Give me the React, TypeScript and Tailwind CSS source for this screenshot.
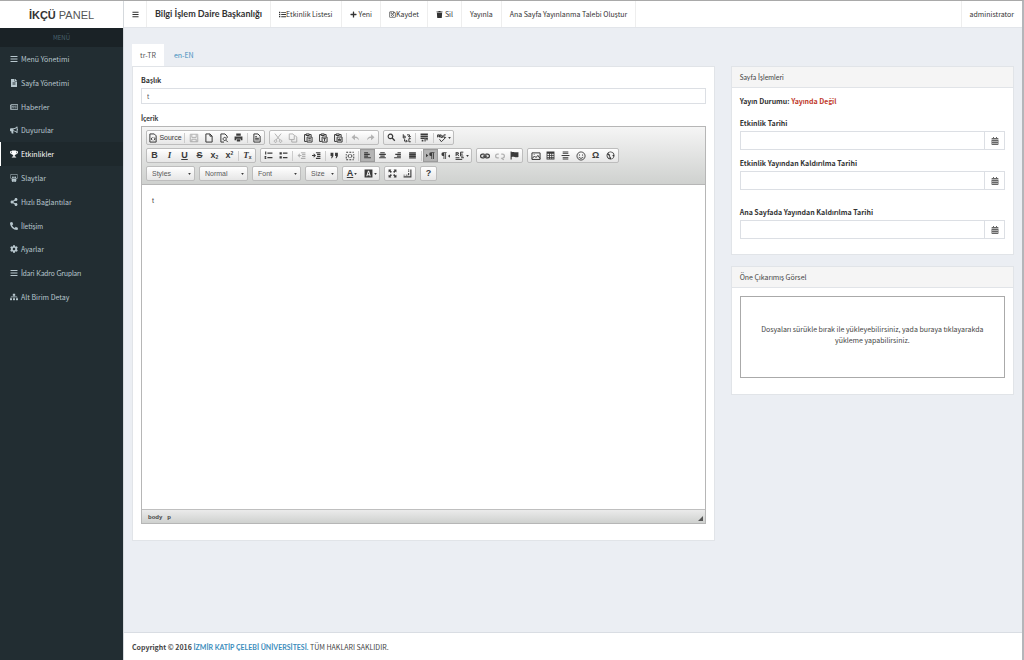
import { useState } from "react";
import type { ReactNode } from "react";
import {
  FaBars,
  FaBullhorn,
  FaCalendarAlt,
  FaCog,
  FaFileAlt,
  FaList,
  FaPhoneAlt,
  FaPlus,
  FaRegNewspaper,
  FaRegSave,
  FaShareAlt,
  FaSitemap,
  FaSlideshare,
  FaTrash,
  FaTrophy,
} from "react-icons/fa";

const menu = [
  { label: "Menü Yönetimi", icon: FaBars },
  { label: "Sayfa Yönetimi", icon: FaFileAlt },
  { label: "Haberler", icon: FaRegNewspaper },
  { label: "Duyurular", icon: FaBullhorn },
  { label: "Etkinlikler", icon: FaTrophy },
  { label: "Slaytlar", icon: FaSlideshare },
  { label: "Hızlı Bağlantılar", icon: FaShareAlt },
  { label: "İletişim", icon: FaPhoneAlt },
  { label: "Ayarlar", icon: FaCog },
  { label: "İdari Kadro Grupları", icon: FaBars },
  { label: "Alt Birim Detay", icon: FaSitemap },
];

const actions = [
  { label: "Etkinlik Listesi", icon: FaList },
  { label: "Yeni", icon: FaPlus, space: true },
  { label: "Kaydet", icon: FaRegSave },
  { label: "Sil", icon: FaTrash, space: true },
  { label: "Yayınla" },
  { label: "Ana Sayfa Yayınlanma Talebi Oluştur" },
];

// the base font has no dotted capital I, so those labels are set in Lato
const fontFor = (text: string) => (text.includes("İ") ? "font-['Lato',sans-serif]" : "");

// stroke icons for the editor toolbar, 16x16 grid
const paths: Record<string, string> = {
  source: "M3 1.5h7l3 3v10H3zM7 7L5 9.500l2 2M9.500 7l2 2.500-2 2",
  save: "M2 2h12v12H2zM4.500 2v5h7V2M4.500 14v-4h7v4",
  page: "M3 1.500h6.500l3.500 3.500v9.500H3zM9.500 1.500V5H13",
  preview: "M13 8V5L9.500 1.500H3v13h5M9 7a2.500 2.500 0 1 0 .1 0M11 11.500l3 3",
  templates: "M3 1.500h6.500l3.500 3.500v9.500H3zM5 6h3M5 8.500h6M5 11h6",
  cut: "M3 1l8 10M13 1L5 11M4 11a2 2 0 1 0 .1 0M12 11a2 2 0 1 0 .1 0",
  copy: "M2 1.500h6l2 2v7H2zM6 10.500v4h8v-8l-2-2h-2",
  paste: "M5 2.500H2.500v11H6M10 2.500h3V6M5 1.500h5v2.500H5zM6.500 6.500h8v8h-8zM8.500 9h4M8.500 11.500h4",
  pasteText: "M5 2.500H2.500v11H6M10 2.500h3V6M5 1.500h5v2.500H5zM6.500 6.500h8v8h-8zM8.500 9h4M10.500 9v4",
  pasteWord: "M5 2.500H2.500v11H6M10 2.500h3V6M5 1.500h5v2.500H5zM6.500 6.500h8v8h-8zM8 9l1.500 3.500L10.500 9l1 3.500L13 9",
  replace: "M2 2v6M2 5h3v3H2M4 10v3h4M6.500 11l2 2-2 2M14 9h-3v5h3M8 3h4v3M10 5l2 2 2-2",
  image: "M1.500 3h13v10.500h-13zM2 12l3.500-4L8 10.500l3-3.500 3.500 5M4.500 5.500h1",
  smiley: "M8 1.500a6.500 6.500 0 1 0 .1 0M5.500 5.500v2M10.500 5.500v2M4.500 9.500c1.500 3 5.500 3 7 0",
  link: "M7 5H4a3 3 0 0 0 0 6h3M9 5h3a3 3 0 0 1 0 6H9M4.500 8h7M7 6h2M7 10h2",
  unlink: "M6 5H4a3 3 0 0 0 0 6h2M10 5h2a3 3 0 0 1 0 6M10 11l4 3",
  div: "M2 2h3M7 2h3M12 2h2M2 14h3M7 14h3M12 14h2M2 5v2M14 5v2M2 9v3M14 9v3M7 5L4.500 8 7 11M9 5l2.500 3L9 11",
};

function Draw({ name, thick = "1.6" }: { name: string; thick?: string }) {
  return (
    <svg viewBox="0 0 16 16" className="size-[10px]" fill="none" stroke="currentColor" strokeWidth={thick}>
      <path d={paths[name]} />
    </svg>
  );
}

// solid icons are plain filled shapes on the same grid
function Solid({ d }: { d: string }) {
  return (
    <svg viewBox="0 0 16 16" className="size-[9px]" fill="currentColor" fillRule="evenodd">
      <path d={d} />
    </svg>
  );
}

const solid = {
  print: "M4 1h8v4H4zM1 6h14v7h-3v-3H4v3H1zM5 11h6v4H5z",
  find: "M6 1a5 5 0 1 0 2.800 9.200L13 14.500l1.700-1.700-4.200-4.200A5 5 0 0 0 6 1zm0 2a3 3 0 1 1 0 6 3 3 0 0 1 0-6z",
  undo: "M7 2v4c5 0 7 3 7 7-2-3-4-4-7-4v4L1 7.500z",
  redo: "M9 2v4c-5 0-7 3-7 7 2-3 4-4 7-4v4l6-5.500z",
  selectAll: "M1 1h13v3H1zM1 5h13v2.500H1zM1 8.500h13v2H1zM3 12h3v3H3zM8 10h2v5H8zM11 11h3v2h-3z",
  numbered: "M2 1h2v5H2zM1 9h3v2H3v1h1v2H1v-1h1v-1H1zM6 2.500h9v2.500H6zM6 10.500h9V13H6z",
  bullets: "M1 2h4v4H1zM1 9.500h4v4H1zM7 2.500h8V5H7zM7 10.500h8V13H7z",
  outdent: "M7 2h8v2H7zM9 5h6v2H9zM9 8.500h6v2H9zM7 12h8v2H7zM5 4v3h3v2H5v3L1 8z",
  indent: "M7 2h8v2H7zM9 5h6v2H9zM9 8.500h6v2H9zM7 12h8v2H7zM3 4l4 4-4 4V9H0V7h3z",
  quote: "M1 3h5v6l-2.500 4H2l1-4H1zM9 3h5v6l-2.500 4H10l1-4H9z",
  left: "M2 2h7v2H2zM2 5h10v2H2zM2 8h7v2H2zM2 11h12v2H2z",
  center: "M4 2h8v2H4zM2 5h12v2H2zM4 8h8v2H4zM2 11h12v2H2z",
  right: "M8 2h6v2H8zM4 5h10v2H4zM7 8h7v2H7zM2 11h12v2H2z",
  justify: "M2 2h12v2.500H2zM2 5h12v2.500H2zM2 8h12v2.500H2zM2 11h12v2.500H2z",
  ltr: "M0 5l4 3-4 3zM9 2h6v1.500h-1V14h-1.500V3.500H11V14H9.500V9a3.500 3.500 0 0 1-.5-7z",
  rtl: "M16 6l-4 3 4 3zM4 2h6v1.500H9V14H7.500V3.500H6V14H4.500V9A3.500 3.500 0 0 1 4 2z",
  flag: "M1 1h2v1c4-1.500 6 1.500 12 0v8.500c-6 1.500-8-1.500-12 0V15H1z",
  table: "M1 1h14v14H1zM2.500 5v2h3V5zM7 5v2h2.500V5zM11 5v2h2.500V5zM2.500 8.500v2h3v-2zM7 8.500v2h2.500v-2zM11 8.500v2h2.500v-2zM2.500 12v1.500h3V12zM7 12v1.500h2.500V12zM11 12v1.500h2.500V12z",
  rule: "M3 1h10v1.500H3zM3 4h10v1.500H3zM1 7h14v2H1zM3 10.500h10V12H3zM3 13.500h10V15H3z",
  globe: "M8 1a7 7 0 1 0 .1 0zM8 2.300a5.700 5.700 0 0 1 5.500 4.200L11 8l2.500 2A5.700 5.700 0 0 1 9 13.600L8.500 11l-2-2 1-2L4 4a5.700 5.700 0 0 1 4-1.700zM3 6l2.500 3 1 4.300A5.700 5.700 0 0 1 3 6z",
  maximize: "M1 1h5L4.500 2.500 7 5 5 7 2.500 4.500 1 6zM15 1h-5l1.500 1.500L9 5l2 2 2.500-2.500L15 6zM1 15h5l-1.500-1.500L7 11 5 9l-2.500 2.500L1 10zM15 15h-5l1.500-1.500L9 11l2-2 2.500 2.500L15 10z",
  blocks: "M13 1h2v14H1v-2h12zM9 1h2v1.500H9zM9 4h2v1.500H9zM9 7h2v4H9zM1 10h2v1.500H1zM5 10h3v1.500H5z",
  textBg: "M1 1h14v14H1zM7 3L4 13h1.800l.6-2h3.200l.6 2H12L9 3zM8 5.500L9.200 9.500H6.800z",
};

function Tool({
  label,
  children,
  on = false,
  off = false,
  arrow = false,
}: {
  label: string;
  children: ReactNode;
  on?: boolean;
  off?: boolean;
  arrow?: boolean;
}) {
  return (
    <button
      type="button"
      aria-label={label}
      aria-pressed={on || undefined}
      disabled={off}
      className={`flex h-[13px] items-center justify-center text-[9px] leading-none font-bold ${
        arrow ? "w-[18px] gap-px" : "w-[15px]"
      } ${on ? "bg-[#b5b5b5] shadow-[inset_0_0_1px_1px_#999]" : ""} ${off ? "opacity-35" : ""}`}
    >
      {children}
      {arrow && <Caret />}
    </button>
  );
}

function Caret() {
  return (
    <svg viewBox="0 0 4 3" className="h-[2px] w-[3px] shrink-0" fill="currentColor">
      <path d="M0 0h4L2 3z" />
    </svg>
  );
}

function Group({ children }: { children: ReactNode }) {
  return (
    <div className="flex items-center rounded-xs border border-[#bdbdbd] bg-gradient-to-b from-white to-[#e6e6e6]">
      {children}
    </div>
  );
}

function Sep() {
  return <span className="mx-px h-[10px] w-px bg-[#ccc]" />;
}

function Combo({ label, width = "w-[49px]" }: { label: string; width?: string }) {
  return (
    <div
      className={`relative rounded-xs border border-[#bdbdbd] bg-gradient-to-b from-white to-[#e6e6e6] ${width}`}
    >
      <select
        aria-label={label}
        className="block h-[13px] w-full appearance-none pl-[5px] text-[7px] leading-[13px] text-[#5a5a5a] outline-none"
      >
        <option>{label}</option>
      </select>
      <span className="pointer-events-none absolute top-[6px] right-[3px]">
        <Caret />
      </span>
    </div>
  );
}

function Toolbar() {
  return (
    <div className="flex flex-col gap-[3px] border-b border-[#b6b6b6] bg-gradient-to-b from-[#f5f5f5] to-[#cfd1cf] px-1 py-[3px] text-[#3a3a3a]">
      <div className="flex gap-1">
        <Group>
          <button type="button" className="flex h-[13px] w-[36px] items-center justify-center gap-px text-[7px]">
            <Draw name="source" />
            Source
          </button>
          <Sep />
          <Tool label="Save" off><Draw name="save" /></Tool>
          <Tool label="New Page"><Draw name="page" /></Tool>
          <Tool label="Preview"><Draw name="preview" /></Tool>
          <Tool label="Print"><Solid d={solid.print} /></Tool>
          <Sep />
          <Tool label="Templates"><Draw name="templates" /></Tool>
        </Group>
        <Group>
          <Tool label="Cut" off><Draw name="cut" /></Tool>
          <Tool label="Copy" off><Draw name="copy" /></Tool>
          <Tool label="Paste"><Draw name="paste" /></Tool>
          <Tool label="Paste as plain text"><Draw name="pasteText" /></Tool>
          <Tool label="Paste from Word"><Draw name="pasteWord" /></Tool>
          <Sep />
          <Tool label="Undo" off><Solid d={solid.undo} /></Tool>
          <Tool label="Redo" off><Solid d={solid.redo} /></Tool>
        </Group>
        <Group>
          <Tool label="Find"><Solid d={solid.find} /></Tool>
          <Tool label="Replace"><Draw name="replace" /></Tool>
          <Sep />
          <Tool label="Select All"><Solid d={solid.selectAll} /></Tool>
          <Sep />
          <Tool label="Spell Check" arrow>
            <svg viewBox="0 0 16 16" className="size-[10px]" fill="none" stroke="currentColor" strokeWidth="1.6">
              <path d="M1 7V3h3v4M1 5h3M6 2v5h3V4.500H6M14 3h-3v4h3M4 10l3 4 7-7" />
            </svg>
          </Tool>
        </Group>
      </div>

      <div className="flex gap-1">
        <Group>
          <Tool label="Bold">B</Tool>
          <Tool label="Italic"><i className="font-['Liberation_Serif',serif]">I</i></Tool>
          <Tool label="Underline"><span className="underline">U</span></Tool>
          <Tool label="Strikethrough"><span className="line-through">S</span></Tool>
          <Tool label="Subscript">x<sub className="text-[5px]">2</sub></Tool>
          <Tool label="Superscript">x<sup className="text-[5px]">2</sup></Tool>
          <Sep />
          <Tool label="Remove Format"><i className="font-['Liberation_Serif',serif]">T</i><sub className="text-[5px]">x</sub></Tool>
        </Group>
        <Group>
          <Tool label="Numbered List"><Solid d={solid.numbered} /></Tool>
          <Tool label="Bulleted List"><Solid d={solid.bullets} /></Tool>
          <Sep />
          <Tool label="Decrease Indent" off><Solid d={solid.outdent} /></Tool>
          <Tool label="Increase Indent"><Solid d={solid.indent} /></Tool>
          <Sep />
          <Tool label="Block Quote"><Solid d={solid.quote} /></Tool>
          <Tool label="Div Container"><Draw name="div" /></Tool>
          <Sep />
          <Tool label="Align Left" on><Solid d={solid.left} /></Tool>
          <Tool label="Center"><Solid d={solid.center} /></Tool>
          <Tool label="Align Right"><Solid d={solid.right} /></Tool>
          <Tool label="Justify"><Solid d={solid.justify} /></Tool>
          <Sep />
          <Tool label="Left to right" on><Solid d={solid.ltr} /></Tool>
          <Tool label="Right to left"><Solid d={solid.rtl} /></Tool>
          <Tool label="Language" arrow>
            <svg viewBox="0 0 18 16" className="h-[9px] w-[10px]" fill="none" stroke="currentColor" strokeWidth="1.8">
              <path d="M2 2v7M2 3h4v2.500H2M4 6l3 3M15 2h-5v7h5M10 5.500h4M1 12h7M11 12h5M1 15h12" />
            </svg>
          </Tool>
        </Group>
        <Group>
          <Tool label="Link"><Draw name="link" thick="2" /></Tool>
          <Tool label="Unlink" off><Draw name="unlink" thick="2" /></Tool>
          <Tool label="Anchor"><Solid d={solid.flag} /></Tool>
        </Group>
        <Group>
          <Tool label="Image"><Draw name="image" /></Tool>
          <Tool label="Table"><Solid d={solid.table} /></Tool>
          <Tool label="Horizontal Line"><Solid d={solid.rule} /></Tool>
          <Tool label="Smiley"><Draw name="smiley" thick="1.4" /></Tool>
          <Tool label="Special Character">Ω</Tool>
          <Tool label="IFrame"><Solid d={solid.globe} /></Tool>
        </Group>
      </div>

      <div className="flex gap-1">
        <Combo label="Styles" />
        <Combo label="Normal" />
        <Combo label="Font" />
        <Combo label="Size" width="w-[33px]" />
        <Group>
          <Tool label="Text Color" arrow><span className="underline">A</span></Tool>
          <Tool label="Background Color" arrow><Solid d={solid.textBg} /></Tool>
        </Group>
        <Group>
          <Tool label="Maximize"><Solid d={solid.maximize} /></Tool>
          <Tool label="Show Blocks"><Solid d={solid.blocks} /></Tool>
        </Group>
        <Group>
          <Tool label="About">?</Tool>
        </Group>
      </div>
    </div>
  );
}

function DateField({ id, label }: { id: string; label: string }) {
  return (
    <div>
      <label htmlFor={id} className="block font-bold text-[#333]">{label}</label>
      <div className="mt-[3px] flex h-[19px] border border-[#dcdfe4]">
        <input id={id} type="text" className="min-w-0 flex-1 px-1.5 outline-none" />
        <button
          type="button"
          aria-label={`${label} seç`}
          className="flex w-5 items-center justify-center border-l border-[#dcdfe4] text-[#666]"
        >
          <FaCalendarAlt className="size-2" />
        </button>
      </div>
    </div>
  );
}

function Panel({ title, children }: { title: string; children: ReactNode }) {
  return (
    <section className="border border-[#e1e4e8] bg-white">
      <h2 className={`border-b border-[#e1e4e8] bg-[#f5f5f5] px-2 py-[5px] ${fontFor(title)}`}>{title}</h2>
      {children}
    </section>
  );
}

export default function App() {
  const [title, setTitle] = useState("t");
  const [body, setBody] = useState("t");

  return (
    <div className="flex min-h-screen border-t border-r-2 border-t-[#a9a9a9] border-r-[#b4b6ba] bg-[#ebeef3] font-['Noto_Sans_CJK_JP','Lato',sans-serif] text-[7px] leading-[10px] text-[#444]">
      <aside className="flex w-[124px] shrink-0 flex-col border-r border-[#d5d9dd] bg-[#222d32]">
        <a href="#" className="flex h-[27px] items-center justify-center bg-white font-['Liberation_Sans',sans-serif] text-[11px] text-[#333]">
          <b>İKÇÜ</b>&nbsp;<span className="text-[#555]">PANEL</span>
        </a>
        <div className="flex h-[19px] items-center justify-center bg-[#1a2226] text-[6px] text-[#4b646f]">MENÜ</div>
        <nav>
          <ul className="grid h-[262px] auto-rows-fr">
            {menu.map(({ label, icon: Icon }) => {
              const active = label === "Etkinlikler";
              return (
                <li key={label} className="grid">
                  <a
                    href="#"
                    className={`flex items-center gap-[3px] border-l pl-[9px] ${fontFor(label)} ${
                      active ? "border-white bg-[#1e282c] text-white" : "border-transparent text-[#b8c7ce]"
                    }`}
                  >
                    <Icon className="size-2" />
                    {label}
                  </a>
                </li>
              );
            })}
          </ul>
        </nav>
      </aside>

      <div className="flex min-w-0 flex-1 flex-col">
        <header className="flex h-[27px] border-b border-[#e2e5ea] bg-white text-[#333]">
          <button type="button" aria-label="Menüyü aç" className="flex w-[23px] items-center justify-center border-r border-[#eee]">
            <FaBars className="size-[7px]" />
          </button>
          <h1 className="flex items-center border-r border-[#eee] px-2 font-['Lato',sans-serif] text-[9px] font-bold">Bilgi İşlem Daire Başkanlığı</h1>
          {actions.map(({ label, icon: Icon, space }) => (
            <button
              key={label}
              type="button"
              className={`flex items-center border-r border-[#eee] px-2 ${space ? "gap-[2px]" : ""}`}
            >
              {Icon && <Icon className="size-[7px]" />}
              {label}
            </button>
          ))}
          <button type="button" className="ml-auto border-l border-[#eee] px-2">administrator</button>
        </header>

        <main className="grid flex-1 grid-cols-[2fr_1fr] items-start pt-4">
          <div className="px-2">
            <div className="flex h-[22px]" role="tablist">
              <button type="button" role="tab" aria-selected="true" className="bg-white px-2 text-[#555]">tr-TR</button>
              <button type="button" role="tab" aria-selected="false" className="px-[10px] text-[#3c8dbc]">en-EN</button>
            </div>
            <div className="border border-[#e1e4e8] bg-white px-2 pt-2 pb-4">
              <label htmlFor="baslik" className="block font-bold text-[#333]">Başlık</label>
              <input
                id="baslik"
                value={title}
                onChange={(e) => setTitle(e.target.value)}
                className="mt-[3px] block h-4 w-full border border-[#dcdfe4] px-[5px] text-[6px] text-[#555] outline-none"
              />
              <label htmlFor="icerik" className="mt-[9px] block font-['Lato',sans-serif] font-bold text-[#333]">İçerik</label>
              <div className="mt-[3px] border border-[#b6b6b6] font-['Liberation_Sans',sans-serif]">
                <Toolbar />
                <textarea
                  id="icerik"
                  value={body}
                  onChange={(e) => setBody(e.target.value)}
                  className="block h-[324px] w-full resize-none px-[10px] py-[11px] text-[7px] outline-none"
                />
                <div className="flex h-[14px] items-center gap-[5px] border-t border-[#bfbfbf] bg-gradient-to-b from-[#ebebeb] to-[#cfd1cf] pr-[2px] pl-[6px] text-[6px] font-bold text-[#444]">
                  <span>body</span>
                  <span>p</span>
                  <svg viewBox="0 0 6 6" className="mt-1 ml-auto size-[5px]" fill="#555">
                    <path d="M6 0v6H0z" />
                  </svg>
                </div>
              </div>
            </div>
          </div>

          <div className="flex flex-col gap-[11px] px-2 pt-[22px]">
            <Panel title="Sayfa İşlemleri">
              <div className="px-2 pt-2 pb-[15px]">
                <p className="font-bold text-[#333]">
                  Yayın Durumu: <span className="text-[#c0392b]">Yayında Değil</span>
                </p>
                <div className="mt-3 flex flex-col gap-2">
                  <DateField id="tarih" label="Etkinlik Tarihi" />
                  <DateField id="kaldirma" label="Etkinlik Yayından Kaldırılma Tarihi" />
                  <div className="pt-[9px]">
                    <DateField id="anasayfa" label="Ana Sayfada Yayından Kaldırılma Tarihi" />
                  </div>
                </div>
              </div>
            </Panel>
            <Panel title="Öne Çıkarımış Görsel">
              <div className="px-2 pt-2 pb-4">
                <button
                  type="button"
                  className="flex h-[82px] w-full items-center justify-center border border-[#aaa] px-5 pb-[5px] leading-[11px]"
                >
                  Dosyaları sürükle bırak ile yükleyebilirsiniz, yada buraya tıklayarakda yükleme yapabilirsiniz.
                </button>
              </div>
            </Panel>
          </div>
        </main>

        <footer className="border-t border-[#d9dde3] bg-white px-2 pt-[9px] pb-2">
          <b>
            Copyright © 2016{" "}
            <a href="#" className="font-['Lato',sans-serif] text-[#3c8dbc]">İZMİR KATİP ÇELEBİ ÜNİVERSİTESİ.</a>
          </b>{" "}
          TÜM HAKLARI SAKLIDIR.
        </footer>
      </div>
    </div>
  );
}
